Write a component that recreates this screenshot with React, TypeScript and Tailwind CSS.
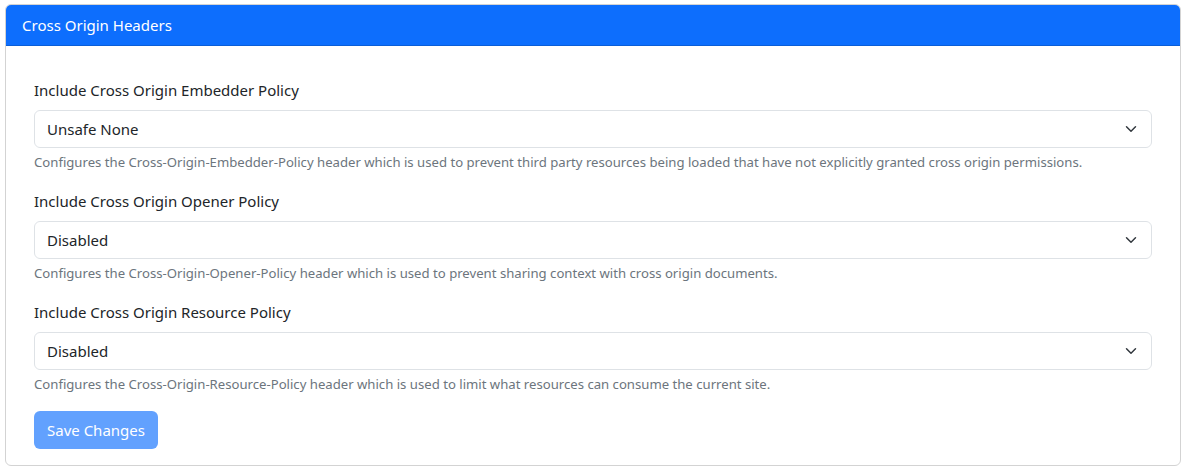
import React from "react";

const Chevron = () => (
  <svg width="16" height="12" viewBox="0 0 16 16" className="shrink-0">
    <path d="M2 5l6 6 6-6" fill="none" stroke="#343a40" strokeWidth="2" strokeLinecap="round" strokeLinejoin="round" />
  </svg>
);

const fields = [
  {
    label: "Include Cross Origin Embedder Policy",
    value: "Unsafe None",
    help: "Configures the Cross-Origin-Embedder-Policy header which is used to prevent third party resources being loaded that have not explicitly granted cross origin permissions.",
  },
  {
    label: "Include Cross Origin Opener Policy",
    value: "Disabled",
    help: "Configures the Cross-Origin-Opener-Policy header which is used to prevent sharing context with cross origin documents.",
  },
  {
    label: "Include Cross Origin Resource Policy",
    value: "Disabled",
    help: "Configures the Cross-Origin-Resource-Policy header which is used to limit what resources can consume the current site.",
  },
];

export default function App() {
  return (
    <div className="bg-white w-[1185px] h-[471px] pt-[4px] pl-[5px] pr-[4px]" style={{ fontFamily: '"Noto Sans", "Open Sans", sans-serif' }}>
      <div className="border border-[#d3d3d3] rounded-[6px] overflow-hidden">
        <div className="bg-[#0d6efd] text-white text-[15px] leading-[24px] px-[16px] py-[8px] border-b border-[#0b5ed7]">
          Cross Origin Headers
        </div>
        <div className="pt-[32px] px-[28px] pb-[16px]">
          {fields.map((f) => (
            <div key={f.label} className="mb-[16px]">
              <div className="text-[15px] leading-[24px] text-[#212529] mb-[8px]">{f.label}</div>
              <div className="h-[38px] border border-[#dee2e6] rounded-[6px] flex items-center justify-between pl-[12px] pr-[12px] text-[15px] text-[#212529]">
                <span>{f.value}</span>
                <Chevron />
              </div>
              <div className="mt-[4px] text-[13.15px] leading-[21px] text-[#6c757d]">{f.help}</div>
            </div>
          ))}
          <button className="h-[38px] px-[13px] rounded-[6px] bg-[#62a1fe] text-white text-[15px] leading-[24px]">
            Save Changes
          </button>
        </div>
      </div>
    </div>
  );
}
